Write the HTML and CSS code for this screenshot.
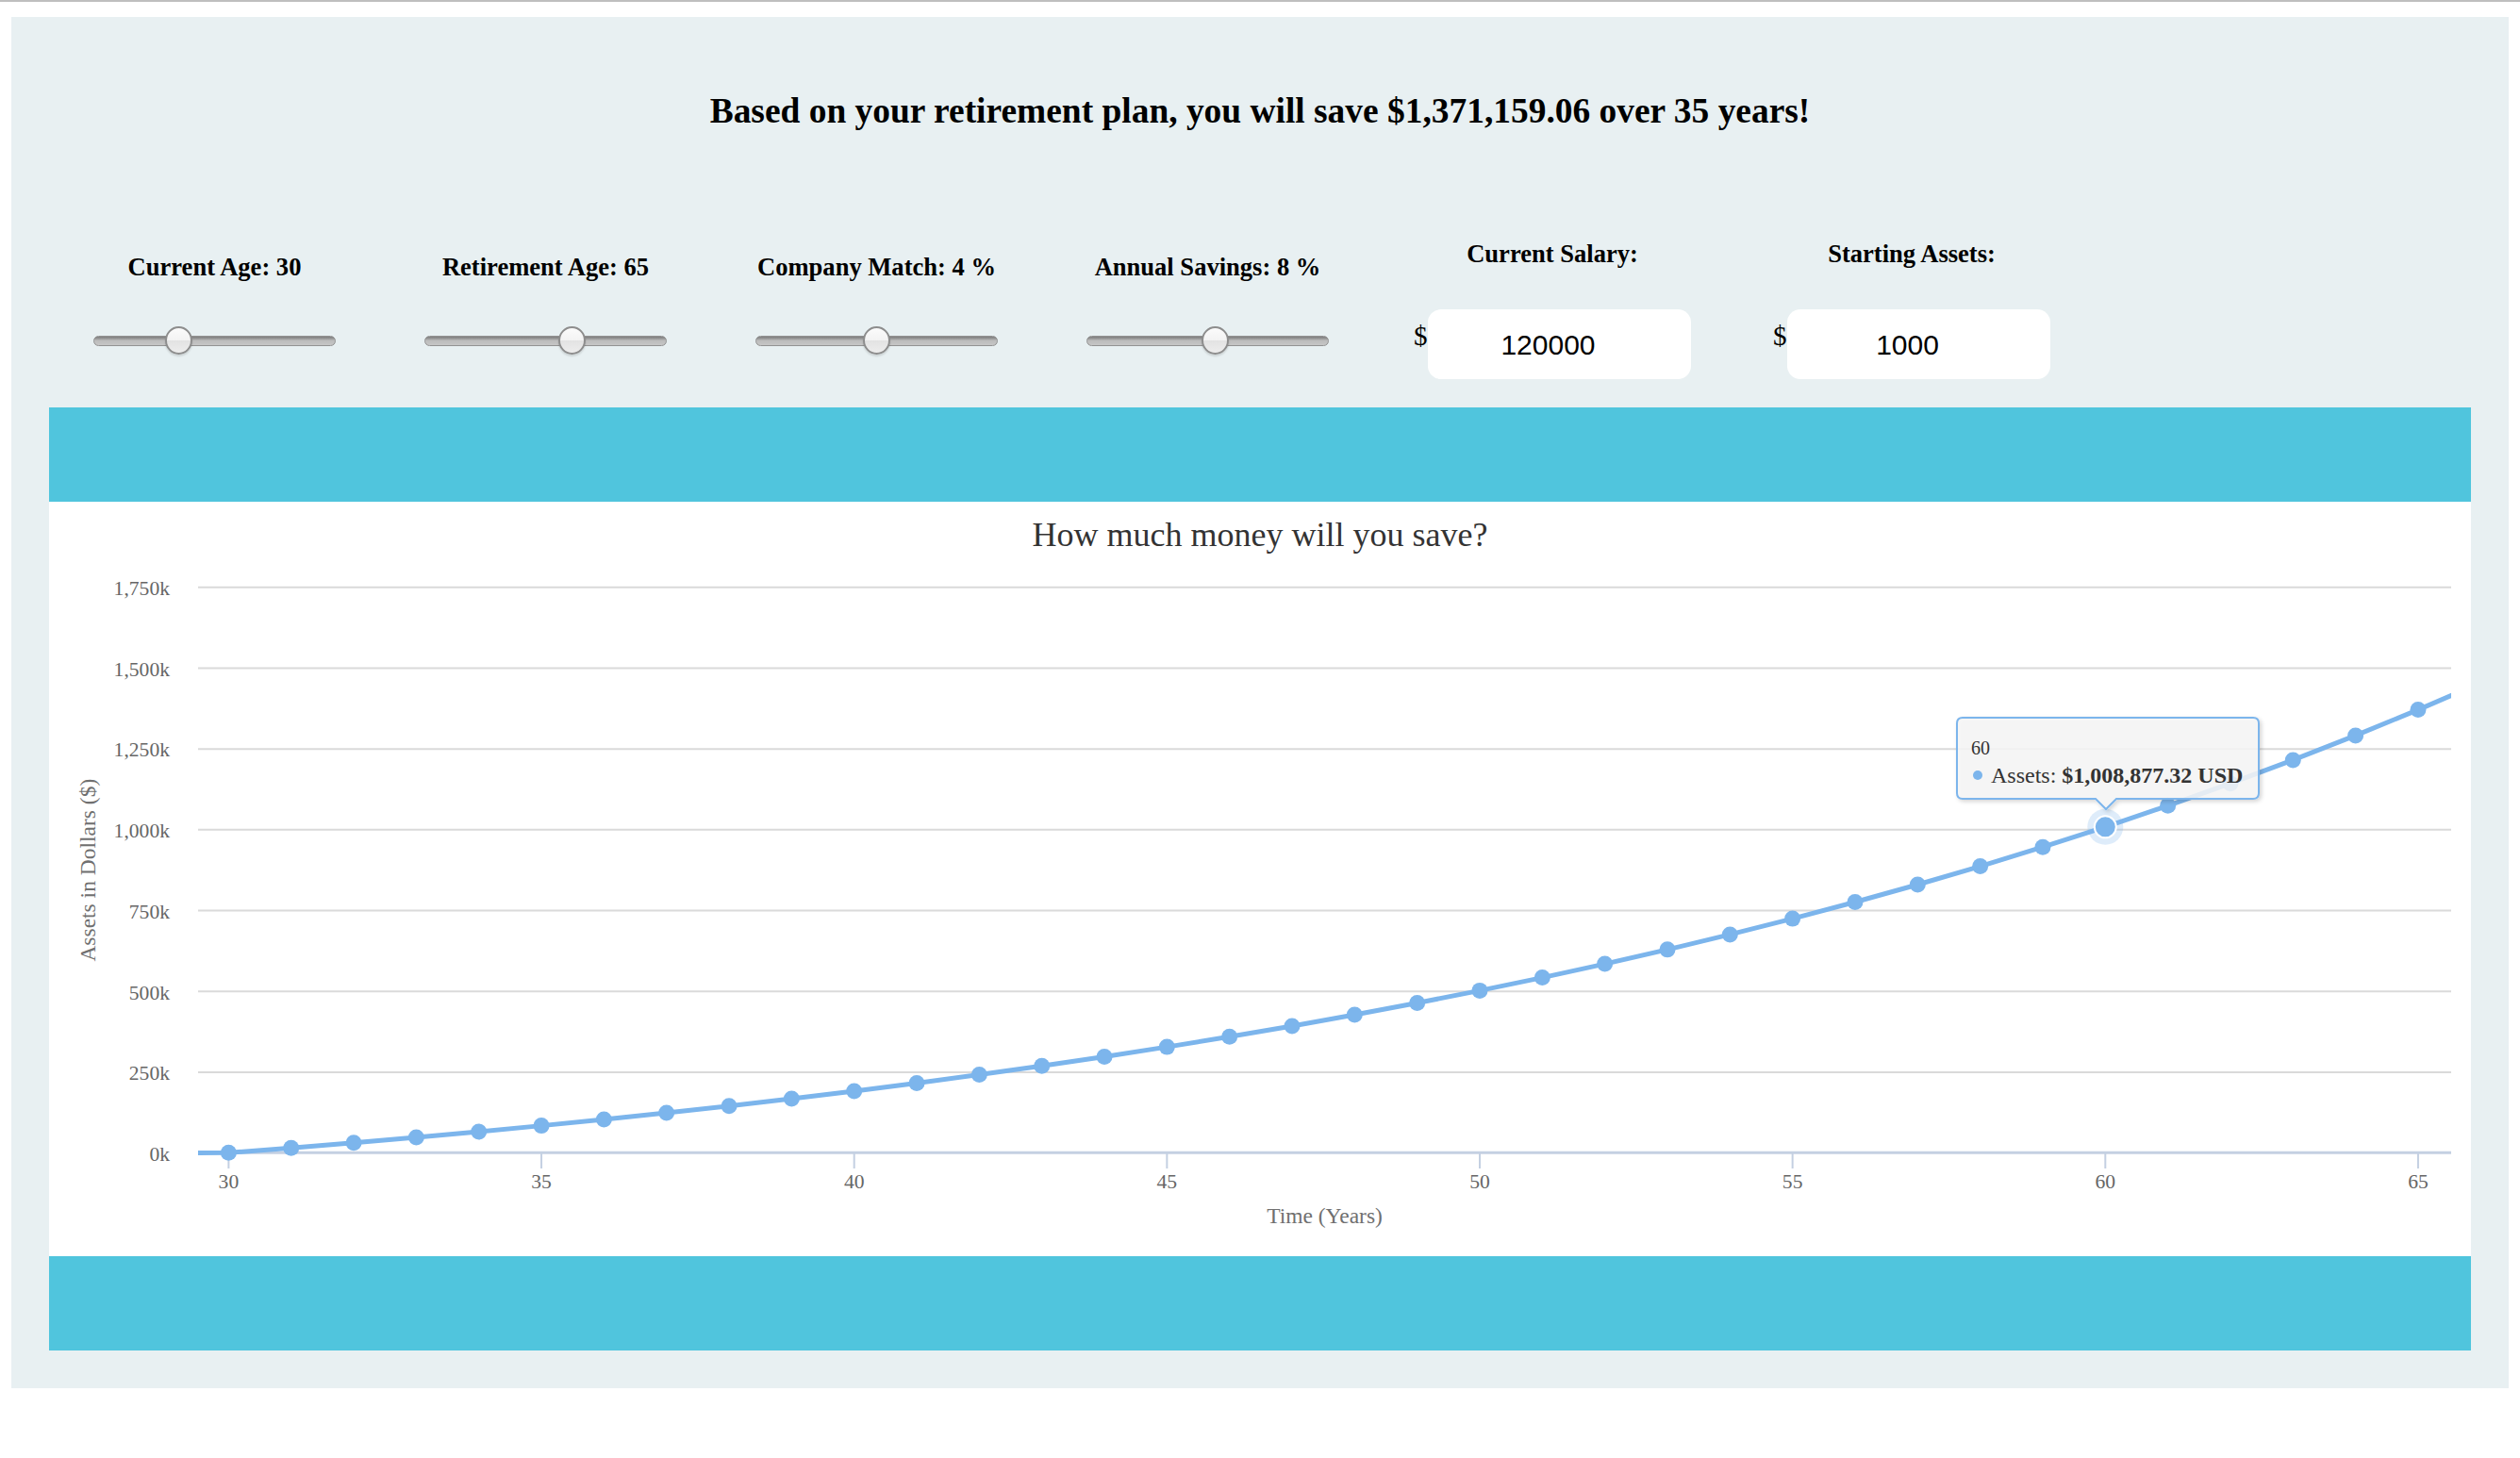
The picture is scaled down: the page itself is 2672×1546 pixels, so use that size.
FILE: index.html
```html
<!DOCTYPE html>
<html lang="en">
<head>
<meta charset="utf-8">
<title>Retirement Calculator</title>
<link rel="stylesheet" href="styles.css">
</head>
<body>
<main class="panel">
  <h1 class="summary">Based on your retirement plan, you will save $1,371,159.06 over 35 years!</h1>

  <section class="controls">
    <div class="control control-slider">
      <label class="ctl-label" for="age">Current Age: 30</label>
      <input class="slider" id="age" type="range" min="20" max="50" value="30">
    </div>
    <div class="control control-slider">
      <label class="ctl-label" for="retire">Retirement Age: 65</label>
      <input class="slider" id="retire" type="range" min="40" max="80" value="65">
    </div>
    <div class="control control-slider">
      <label class="ctl-label" for="match">Company Match: 4 %</label>
      <input class="slider" id="match" type="range" min="0" max="8" value="4">
    </div>
    <div class="control control-slider">
      <label class="ctl-label" for="savings">Annual Savings: 8 %</label>
      <input class="slider" id="savings" type="range" min="0" max="15" value="8">
    </div>
    <div class="control control-input">
      <label class="ctl-label" for="salary">Current Salary:</label>
      <div class="money">
        <span class="dollar">$</span>
        <input class="amount" id="salary" type="text" value="120000">
      </div>
    </div>
    <div class="control control-input">
      <label class="ctl-label" for="assets">Starting Assets:</label>
      <div class="money">
        <span class="dollar">$</span>
        <input class="amount" id="assets" type="text" value="1000">
      </div>
    </div>
  </section>

  <section class="chart-card">
    <div class="band"></div>
    <div class="chart">
      <svg class="chart-svg" width="2568" height="800" viewBox="0 0 2568 800" xmlns="http://www.w3.org/2000/svg">
        <defs>
          <clipPath id="plot">
            <rect x="158" y="0" width="2389" height="800"></rect>
          </clipPath>
          <filter id="tipShadow" x="-10%" y="-20%" width="130%" height="160%">
            <feDropShadow dx="2" dy="2" stdDeviation="2" flood-color="#000" flood-opacity="0.18"></feDropShadow>
          </filter>
        </defs>

        <text class="chart-title" x="1284" y="47" text-anchor="middle">How much money will you save?</text>

        <g class="grid">
          <line x1="158" x2="2547" y1="604.99" y2="604.99"></line>
          <line x1="158" x2="2547" y1="519.27" y2="519.27"></line>
          <line x1="158" x2="2547" y1="433.56" y2="433.56"></line>
          <line x1="158" x2="2547" y1="347.84" y2="347.84"></line>
          <line x1="158" x2="2547" y1="262.13" y2="262.13"></line>
          <line x1="158" x2="2547" y1="176.42" y2="176.42"></line>
          <line x1="158" x2="2547" y1="90.7" y2="90.7"></line>
        </g>
        <line class="axis-line" x1="158" x2="2547" y1="690.2" y2="690.2"></line>
        <g class="ticks">
          <line x1="190.4" x2="190.4" y1="691" y2="707"></line>
          <line x1="522.05" x2="522.05" y1="691" y2="707"></line>
          <line x1="853.7" x2="853.7" y1="691" y2="707"></line>
          <line x1="1185.35" x2="1185.35" y1="691" y2="707"></line>
          <line x1="1517" x2="1517" y1="691" y2="707"></line>
          <line x1="1848.65" x2="1848.65" y1="691" y2="707"></line>
          <line x1="2180.3" x2="2180.3" y1="691" y2="707"></line>
          <line x1="2511.95" x2="2511.95" y1="691" y2="707"></line>
        </g>

        <g class="y-labels" text-anchor="end">
          <text x="128" y="699">0k</text>
          <text x="128" y="613">250k</text>
          <text x="128" y="527.5">500k</text>
          <text x="128" y="441.5">750k</text>
          <text x="128" y="356">1,000k</text>
          <text x="128" y="270">1,250k</text>
          <text x="128" y="184.5">1,500k</text>
          <text x="128" y="99">1,750k</text>
        </g>
        <g class="x-labels" text-anchor="middle">
          <text x="190.4" y="728">30</text>
          <text x="522.05" y="728">35</text>
          <text x="853.7" y="728">40</text>
          <text x="1185.35" y="728">45</text>
          <text x="1517" y="728">50</text>
          <text x="1848.65" y="728">55</text>
          <text x="2180.3" y="728">60</text>
          <text x="2511.95" y="728">65</text>
        </g>
        <text class="axis-title" x="1352.5" y="765" text-anchor="middle">Time (Years)</text>
        <text class="axis-title" transform="translate(49 390.7) rotate(-90)" x="0" y="0" text-anchor="middle">Assets in Dollars ($)</text>

        <g clip-path="url(#plot)">
          <polyline class="series" points="124.07,690.7 190.4,690.36 256.73,685.16 323.06,679.69 389.39,673.96 455.72,667.94 522.05,661.62 588.38,654.98 654.71,648.01 721.04,640.69 787.37,633.01 853.7,624.94 920.03,616.47 986.36,607.57 1052.69,598.23 1119.02,588.42 1185.35,578.12 1251.68,567.31 1318.01,555.96 1384.34,544.04 1450.67,531.52 1517,518.38 1583.33,504.58 1649.66,490.09 1715.99,474.87 1782.32,458.9 1848.65,442.12 1914.98,424.51 1981.31,406.02 2047.64,386.6 2113.97,366.21 2180.3,344.8 2246.63,322.32 2312.96,298.72 2379.29,273.93 2445.62,247.91 2511.95,220.59 2578.28,191.9"></polyline>
        </g>
        <g class="markers">
          <circle cx="190.4" cy="690.36" r="8.5"></circle>
          <circle cx="256.73" cy="685.16" r="8.5"></circle>
          <circle cx="323.06" cy="679.69" r="8.5"></circle>
          <circle cx="389.39" cy="673.96" r="8.5"></circle>
          <circle cx="455.72" cy="667.94" r="8.5"></circle>
          <circle cx="522.05" cy="661.62" r="8.5"></circle>
          <circle cx="588.38" cy="654.98" r="8.5"></circle>
          <circle cx="654.71" cy="648.01" r="8.5"></circle>
          <circle cx="721.04" cy="640.69" r="8.5"></circle>
          <circle cx="787.37" cy="633.01" r="8.5"></circle>
          <circle cx="853.7" cy="624.94" r="8.5"></circle>
          <circle cx="920.03" cy="616.47" r="8.5"></circle>
          <circle cx="986.36" cy="607.57" r="8.5"></circle>
          <circle cx="1052.69" cy="598.23" r="8.5"></circle>
          <circle cx="1119.02" cy="588.42" r="8.5"></circle>
          <circle cx="1185.35" cy="578.12" r="8.5"></circle>
          <circle cx="1251.68" cy="567.31" r="8.5"></circle>
          <circle cx="1318.01" cy="555.96" r="8.5"></circle>
          <circle cx="1384.34" cy="544.04" r="8.5"></circle>
          <circle cx="1450.67" cy="531.52" r="8.5"></circle>
          <circle cx="1517" cy="518.38" r="8.5"></circle>
          <circle cx="1583.33" cy="504.58" r="8.5"></circle>
          <circle cx="1649.66" cy="490.09" r="8.5"></circle>
          <circle cx="1715.99" cy="474.87" r="8.5"></circle>
          <circle cx="1782.32" cy="458.9" r="8.5"></circle>
          <circle cx="1848.65" cy="442.12" r="8.5"></circle>
          <circle cx="1914.98" cy="424.51" r="8.5"></circle>
          <circle cx="1981.31" cy="406.02" r="8.5"></circle>
          <circle cx="2047.64" cy="386.6" r="8.5"></circle>
          <circle cx="2113.97" cy="366.21" r="8.5"></circle>
          <circle cx="2246.63" cy="322.32" r="8.5"></circle>
          <circle cx="2312.96" cy="298.72" r="8.5"></circle>
          <circle cx="2379.29" cy="273.93" r="8.5"></circle>
          <circle cx="2445.62" cy="247.91" r="8.5"></circle>
          <circle cx="2511.95" cy="220.59" r="8.5"></circle>
        </g>
        <circle class="halo" cx="2180.3" cy="344.8" r="19"></circle>
        <circle class="hover-marker" cx="2180.3" cy="344.8" r="11.5"></circle>

        <g class="tooltip">
          <path class="tip-box" filter="url(#tipShadow)" d="M 2029 229 L 2337 229 Q 2343 229 2343 235 L 2343 309 Q 2343 315 2337 315 L 2192 315 L 2181 326 L 2170 315 L 2029 315 Q 2023 315 2023 309 L 2023 235 Q 2023 229 2029 229 Z"></path>
          <text class="tip-head" x="2038" y="268">60</text>
          <circle class="tip-dot" cx="2045" cy="290" r="5"></circle>
          <text class="tip-line" x="2059" y="298">Assets: <tspan class="tip-value">$1,008,877.32 USD</tspan></text>
        </g>
      </svg>
    </div>
    <div class="band"></div>
  </section>
</main>
</body>
</html>
```

FILE: styles.css
```css
html, body {
  margin: 0;
  padding: 0;
  background: #ffffff;
}

body {
  border-top: 2px solid #bfbfbf;
  font-family: "Liberation Serif", "Times New Roman", serif;
  color: #000;
}

.panel {
  margin: 16px 12px 0;
  padding: 78px 40px 40px;
  background: #e8f0f2;
}

.summary {
  margin: 0;
  font-size: 37.44px;
  line-height: 44px;
  font-weight: bold;
  text-align: center;
}

.controls {
  margin-top: 113px;
  display: grid;
  grid-template-columns: 351px 351px 351px 351px 380px 382px;
  align-items: start;
}

.control {
  display: flex;
  flex-direction: column;
  align-items: center;
}

.ctl-label {
  font-size: 26.56px;
  line-height: 32px;
  font-weight: bold;
  white-space: nowrap;
}

.control-slider .ctl-label {
  margin-top: 14px;
}

.slider {
  -webkit-appearance: none;
  appearance: none;
  width: 257px;
  height: 30px;
  margin: 47px 0 0;
  padding: 0;
  background: transparent;
}

.slider::-webkit-slider-runnable-track {
  height: 11px;
  box-sizing: border-box;
  border: 1px solid #929292;
  border-radius: 6px;
  background: linear-gradient(#7e7e7e 0%, #9a9a9a 25%, #bcbcbc 45%, #c6c6c6 100%);
}

.slider::-webkit-slider-thumb {
  -webkit-appearance: none;
  appearance: none;
  box-sizing: border-box;
  width: 29px;
  height: 30px;
  margin-top: -10.5px;
  border: 2px solid #8d8d8d;
  border-radius: 50%;
  background: linear-gradient(#fbfbfb 0%, #f3f3f3 48%, #e3e3e3 52%, #ededed 100%);
  box-shadow: 0 2px 2px rgba(0, 0, 0, 0.12);
}

.money {
  margin-top: 43px;
  display: flex;
  align-items: flex-start;
}

.dollar {
  width: 15px;
  margin-top: 12px;
  font-size: 29px;
  line-height: 32px;
}

.amount {
  box-sizing: border-box;
  width: 279px;
  height: 74px;
  margin: 0;
  padding: 2px 24px 0 0;
  border: none;
  border-radius: 14px;
  background: #ffffff;
  font-family: "Liberation Sans", Arial, sans-serif;
  font-size: 30px;
  color: #000;
  text-align: center;
  outline: none;
}

.chart-card {
  margin-top: 30px;
}

.band {
  height: 100px;
  background: #50c5dd;
}

.chart {
  height: 800px;
  background: #ffffff;
}

.chart-svg {
  display: block;
}

.chart-title {
  font-family: "Liberation Serif", "Times New Roman", serif;
  font-size: 36px;
  fill: #333333;
}

.grid line {
  stroke: #dadada;
  stroke-width: 2;
}

.axis-line {
  stroke: #c4d0e2;
  stroke-width: 3;
}

.ticks line {
  stroke: #c4d0e2;
  stroke-width: 2;
}

.y-labels text,
.x-labels text {
  font-family: "Liberation Serif", "Times New Roman", serif;
  font-size: 21.6px;
  fill: #666666;
}

.axis-title {
  font-family: "Liberation Serif", "Times New Roman", serif;
  font-size: 23.5px;
  fill: #707070;
}

.series {
  fill: none;
  stroke: #7cb5ec;
  stroke-width: 5;
  stroke-linejoin: round;
  stroke-linecap: round;
}

.markers circle {
  fill: #7cb5ec;
}

.halo {
  fill: #7cb5ec;
  fill-opacity: 0.25;
}

.hover-marker {
  fill: #7cb5ec;
  stroke: #ffffff;
  stroke-width: 2;
}

.tip-box {
  fill: rgba(247, 247, 247, 0.85);
  stroke: #7cb5ec;
  stroke-width: 2;
}

.tip-head {
  font-family: "Liberation Serif", "Times New Roman", serif;
  font-size: 20px;
  fill: #333333;
}

.tip-dot {
  fill: #7cb5ec;
}

.tip-line {
  font-family: "Liberation Serif", "Times New Roman", serif;
  font-size: 24px;
  fill: #333333;
}

.tip-value {
  font-weight: bold;
}
```
